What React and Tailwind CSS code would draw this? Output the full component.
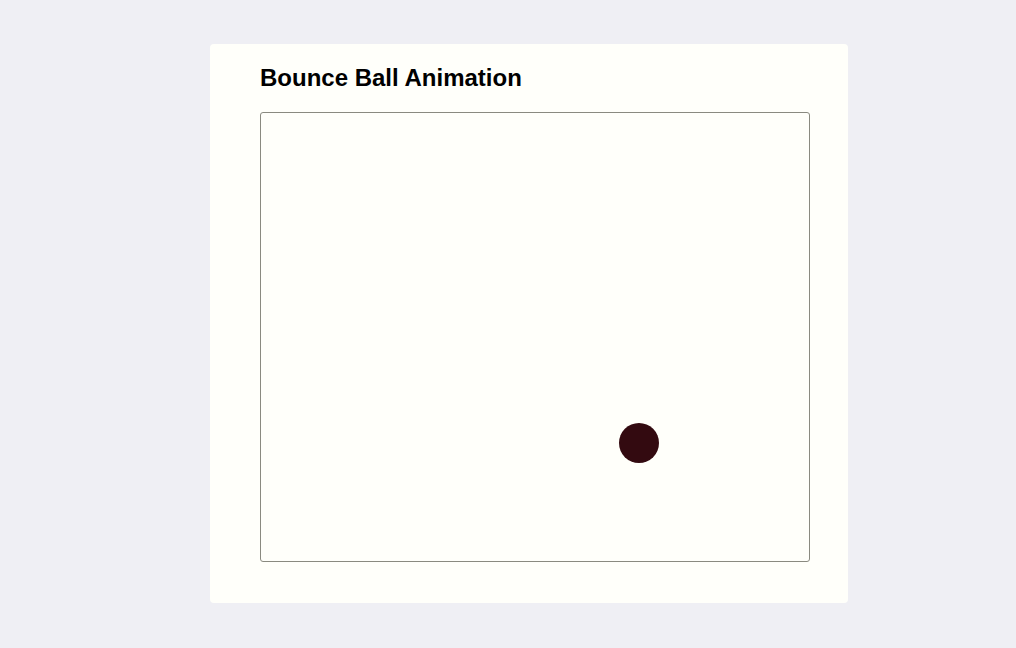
import React from "react";

export default function App() {
  return (
    <div className="min-h-[648px] w-full bg-[#efeff4] pl-[210px] pt-[44px] font-['Liberation_Sans',Arial,sans-serif]">
      <div className="w-[638px] rounded-sm bg-[#fffffa] pb-[41px] pl-[50px] pr-[38px] pt-[20px]">
        <h1 className="text-[24px] font-bold leading-[27px] text-black">Bounce Ball Animation</h1>
        <div className="relative mt-[21px] h-[450px] w-[550px] rounded-[3px] border border-[#8a8a80] bg-[#fffffa]">
          <div className="absolute left-[358px] top-[310px] h-[40px] w-[40px] rounded-full bg-[#330a10]" />
        </div>
      </div>
    </div>
  );
}
